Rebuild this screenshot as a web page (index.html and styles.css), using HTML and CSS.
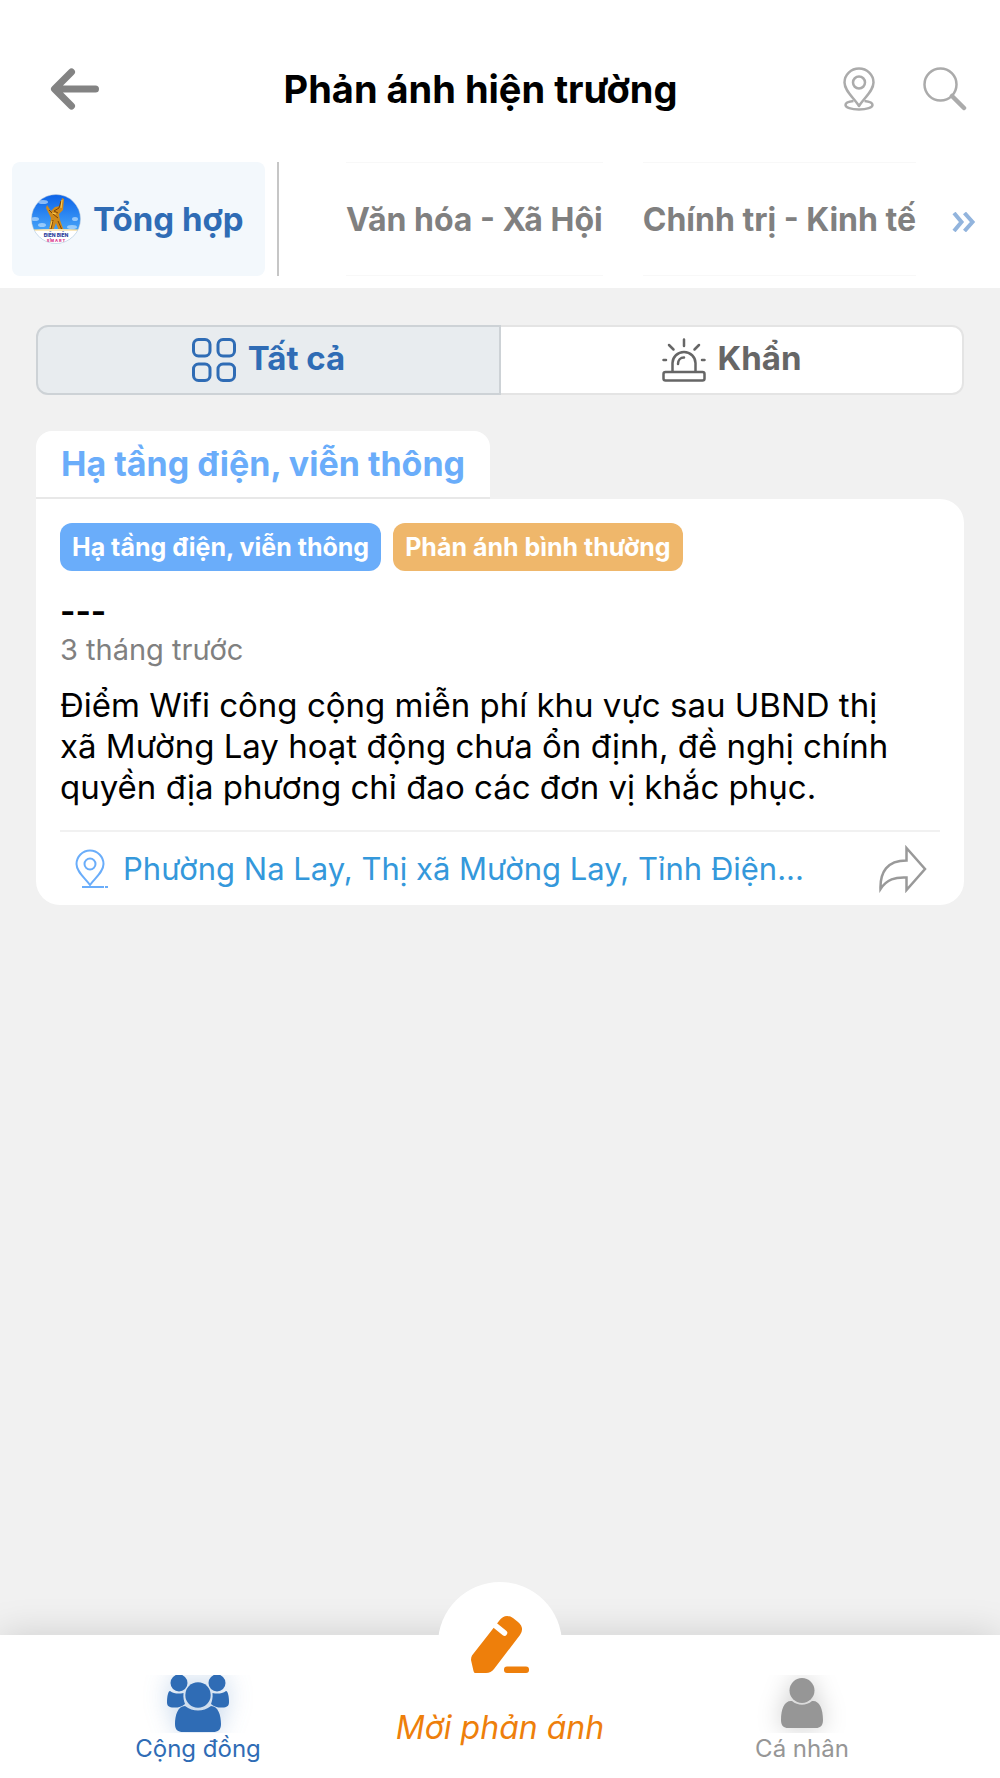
FILE: index.html
```html
<!DOCTYPE html>
<html lang="vi">
<head>
  <meta charset="UTF-8">
  <meta name="viewport" content="width=device-width, initial-scale=1.0">
  <title>Phản ánh hiện trường</title>
  <link rel="stylesheet" href="styles.css">
</head>
<body>
  <header class="header">
    <button class="icon-btn back" aria-label="Quay lại">
      <svg width="50" height="42" viewBox="0 0 50 42" fill="none" stroke="#838383" stroke-width="7" stroke-linecap="round" stroke-linejoin="round">
        <path d="M5 21H45.500M21.500 4L4.500 21L21.500 38"/>
      </svg>
    </button>
    <h1 class="title">Phản ánh hiện trường</h1>
    <button class="icon-btn" aria-label="Bản đồ">
      <svg width="32" height="44" viewBox="0 0 32 44" fill="none" stroke="#ababab" stroke-width="2.500" stroke-linejoin="round">
        <circle cx="16" cy="15.500" r="6"/>
        <path d="M16 39C11 31 1.500 24 1.500 15.500A14.500 14 0 0 1 30.500 15.500C30.500 24 21 31 16 39Z"/>
        <path d="M10.500 34C5 34.500 2.500 36 2.500 38C2.500 40.500 8 42.500 16 42.500S29.500 40.500 29.500 38C29.500 36 27 34.500 21.500 34"/>
      </svg>
    </button>
    <button class="icon-btn" aria-label="Tìm kiếm">
      <svg width="44" height="44" viewBox="0 0 44 44" fill="none" stroke="#ababab" stroke-linecap="round">
        <circle cx="17.500" cy="17.500" r="16" stroke-width="2.500"/>
        <path d="M29 29L41 41" stroke-width="4.500"/>
      </svg>
    </button>
  </header>

  <nav class="tabs">
    <button class="tab active">
      <svg class="logo" width="50" height="50" viewBox="0 0 50 50">
        <defs>
          <linearGradient id="sky" x1="0" y1="0" x2="0" y2="1">
            <stop offset="0" stop-color="#0b62e8"/>
            <stop offset="1" stop-color="#5cbcff"/>
          </linearGradient>
          <clipPath id="round"><circle cx="25" cy="25" r="24.500"/></clipPath>
        </defs>
        <g clip-path="url(#round)">
          <rect width="50" height="50" fill="url(#sky)"/>
          <g fill="#d4ecff" opacity="0.6">
            <ellipse cx="12" cy="8" rx="5" ry="2"/>
            <ellipse cx="4" cy="25" rx="4" ry="2"/>
            <ellipse cx="44" cy="25" rx="3" ry="2"/>
            <ellipse cx="11" cy="31" rx="4" ry="2"/>
            <ellipse cx="41" cy="33" rx="5" ry="2"/>
          </g>
          <path d="M31 4L33 5L32 16L28 20L29 26L33 37H28L25 29L22 37H18L20 24L15 14L16 11L20 17L24 13L29 12Z" fill="#d08a1b"/>
          <path d="M30 7L28 14L23 17L27 19M18 16L22 20L27 24M22 26L20 35M27 27L31 36" stroke="#7a4308" fill="none"/>
          <path d="M31 6L30 14M21 19L25 20M21 27L19 34" stroke="#ffcf50" fill="none"/>
          <path d="M0 36Q25 34 50 36V50H0Z" fill="#fff"/>
          <path d="M3 36H47" stroke="#f3cf78"/>
          <text class="logo-name" x="25" y="43" text-anchor="middle">ĐIỆN BIÊN</text>
          <text class="logo-sub" x="25" y="48" text-anchor="middle">S M A R T</text>
        </g>
        <circle cx="25" cy="25" r="24.500" fill="none" stroke="#c6ced6" stroke-width="0.500"/>
      </svg>
      Tổng hợp
    </button>
    <span class="divider"></span>
    <div class="tab-list">
      <button class="tab">Văn hóa - Xã Hội</button>
      <button class="tab">Chính trị - Kinh tế</button>
    </div>
    <button class="icon-btn more" aria-label="Xem thêm">
      <svg width="24" height="20" viewBox="0 0 24 20" fill="none" stroke="#92b4dd" stroke-width="4">
        <path d="M2 1L9.500 10L2 19M12.500 1L20.500 10L12.500 19"/>
      </svg>
    </button>
  </nav>

  <main class="content">
    <div class="switch">
      <button class="switch-btn selected">
        <svg width="44" height="44" viewBox="0 0 44 44" fill="none" stroke="#2f6cb5" stroke-width="3">
          <rect x="1.500" y="1.500" width="16.500" height="16.500" rx="5"/>
          <rect x="26" y="1.500" width="16.500" height="16.500" rx="5"/>
          <rect x="1.500" y="26" width="16.500" height="16.500" rx="5"/>
          <rect x="26" y="26" width="16.500" height="16.500" rx="5"/>
        </svg>
        <span>Tất cả</span>
      </button>
      <button class="switch-btn">
        <svg width="44" height="44" viewBox="0 0 44 44" fill="none" stroke="#666" stroke-width="2.500" stroke-linecap="round">
          <rect x="1.500" y="34" width="41" height="8.500" rx="2"/>
          <path d="M10.500 33V25A11.500 11 0 0 1 33.500 25V33M16 26C16 22 18.500 19.500 22 19.500"/>
          <path d="M22 1.500V8M7 7L11.500 11.500M37 7L32.500 11.500M1.500 22H4M40 22H42.500"/>
        </svg>
        <span>Khẩn</span>
      </button>
    </div>

    <section class="group">
      <h2 class="group-title">Hạ tầng điện, viễn thông</h2>
      <article class="card">
        <div class="tags">
          <span class="tag blue">Hạ tầng điện, viễn thông</span>
          <span class="tag orange">Phản ánh bình thường</span>
        </div>
        <h3 class="name">---</h3>
        <p class="time">3 tháng trước</p>
        <p class="text">Điểm Wifi công cộng miễn phí khu vực sau UBND thị xã Mường Lay hoạt động chưa ổn định, đề nghị chính quyền địa phương chỉ đao các đơn vị khắc phục.</p>
        <div class="card-footer">
          <svg width="33" height="40" viewBox="0 0 33 40" fill="none" stroke="#6aadfa" stroke-width="2">
            <circle cx="15" cy="15" r="5.500"/>
            <path d="M15 36C10 29 1.500 23 1.500 15A13.500 13.500 0 0 1 28.500 15C28.500 23 20 29 15 36Z"/>
            <path d="M7 38H29M30 38H33"/>
          </svg>
          <a class="place" href="#">Phường Na Lay, Thị xã Mường Lay, Tỉnh Điện...</a>
          <button class="icon-btn" aria-label="Chia sẻ">
            <svg width="50" height="48" viewBox="0 0 50 48" fill="none" stroke="#999" stroke-width="2.500">
              <path d="M28.500 3L47 24L28.500 45V32.500C17 32 9 34 2.500 44C2 27 9 15.500 28.500 15.500Z"/>
            </svg>
          </button>
        </div>
      </article>
    </section>
  </main>

  <nav class="bottom-nav">
    <a class="nav-item current" href="#">
      <svg width="120" height="58" viewBox="0 0 120 58">
        <g class="glow" fill="#2f6cb5">
          <circle cx="41" cy="8" r="8.500"/>
          <circle cx="79" cy="8" r="8.500"/>
          <path d="M32 16C36 19 41 19 45.500 18C45 23 46 26 47 29C43 32 40 33 34 32.500C30 32 29 30 29 27C29 22 30 16 32 16Z"/>
          <path d="M88 16C84 19 79 19 74.500 18C75 23 74 26 73 29C77 32 80 33 86 32.500C90 32 91 30 91 27C91 22 90 16 88 16Z"/>
          <circle cx="60" cy="20" r="12.700"/>
          <path d="M47 31C55 37 65 37 73 31C80 31 83 40 83 49C83 55 80 57 75 57H45C40 57 37 55 37 49C37 40 40 31 47 31Z"/>
        </g>
      </svg>
      <span>Cộng đồng</span>
    </a>
    <a class="nav-item write" href="#">
      <svg width="60" height="60" viewBox="0 0 60 60" fill="#ee7f0b">
        <path d="M2 37.500L29 3Q35-5 43 0L48 4Q55 10 50 17L24 51Q21 55 16 55H5Q4 55 3.500 53L1 42Q1 39 2 37.500Z"/>
        <path d="M24 6.500L34.500 15" stroke="#fff" stroke-width="5.500" stroke-linecap="round"/>
        <rect x="34" y="48.500" width="25" height="6.500" rx="3"/>
      </svg>
      <span>Mời phản ánh</span>
    </a>
    <a class="nav-item" href="#">
      <svg width="120" height="58" viewBox="0 0 120 58">
        <g class="glow gray" fill="#969696">
          <circle cx="60" cy="15.500" r="12.500"/>
          <path d="M50 26C56 31 64 31 70 26C77 25 81 33 81 45C81 51 78 53 74 53H46C42 53 39 51 39 45C39 33 43 25 50 26Z"/>
        </g>
      </svg>
      <span>Cá nhân</span>
    </a>
  </nav>
</body>
</html>
```
FILE: styles.css
```css
* {
  box-sizing: border-box;
}

body {
  margin: 0;
  min-height: 100vh;
  display: flex;
  flex-direction: column;
  background-color: #f1f1f1;
  font-family: Inter, "Noto Sans", sans-serif;
  color: #000;
}

button {
  font: inherit;
  color: inherit;
  background: none;
  border: none;
  padding: 0;
}

a {
  text-decoration: none;
}

svg {
  display: block;
  flex-shrink: 0;
}

.header {
  display: flex;
  align-items: center;
  padding: 64px 33px 48px 50px;
  background-color: #fff;
}

.icon-btn {
  display: flex;
  align-items: center;
}

.back {
  width: 68px;
}

.header .icon-btn:last-child {
  margin-left: 48px;
}

.title {
  flex: 1;
  margin: 0;
  text-align: center;
  font-size: 38px;
  line-height: 50px;
  font-weight: 700;
}

.tabs {
  display: flex;
  padding: 0 24px 12px 12px;
  background-color: #fff;
}

.tab {
  height: 114px;
  color: #808080;
  font-size: 32px;
  font-weight: 700;
  white-space: nowrap;
}

.tab.active {
  display: flex;
  align-items: center;
  gap: 12px;
  padding: 0 22px 0 19px;
  border-radius: 8px;
  background-color: #f3f8fc;
  color: #2f6cb5;
  font-size: 33px;
}

.logo-name {
  font-size: 5px;
  font-weight: 800;
  fill: #2a3c9c;
}

.logo-sub {
  font-size: 4px;
  font-weight: 800;
  fill: #d8328c;
}

.divider {
  width: 2px;
  margin-left: 12px;
  background-color: #c6c6c6;
}

.tab-list {
  flex: 1;
  display: flex;
  justify-content: flex-end;
  gap: 40px;
}

.tab-list .tab {
  border-top: 1px solid #f8f8f8;
  border-bottom: 1px solid #f8f8f8;
}

.more {
  margin: 6px 0 0 36px;
}

.content {
  flex: 1;
  padding: 37px 36px;
}

.switch {
  display: flex;
}

.switch-btn {
  flex: 1;
  display: flex;
  justify-content: center;
  align-items: center;
  gap: 12px;
  height: 70px;
  border: 2px solid #e4e4e4;
  border-left: none;
  border-radius: 0 12px 12px 0;
  background-color: #fff;
  color: #666;
  font-size: 33px;
  font-weight: 700;
}

.switch-btn.selected {
  border: 2px solid #cdd2d6;
  border-radius: 12px 0 0 12px;
  background-color: #e8ecef;
  color: #2f6cb5;
}

.switch-btn span {
  padding-bottom: 4px;
}

.group {
  margin-top: 36px;
}

.group-title {
  width: fit-content;
  margin: 0;
  padding: 0 25px;
  border-radius: 16px 16px 0 0;
  border-bottom: 2px solid #e8e8e8;
  background-color: #fff;
  color: #6aadfa;
  font-size: 34px;
  line-height: 66px;
  font-weight: 700;
}

.card {
  padding: 24px 24px 12px;
  border-radius: 0 24px 24px 24px;
  background-color: #fff;
}

.tags {
  display: flex;
  gap: 12px;
}

.tag {
  padding: 0 12px;
  border-radius: 12px;
  color: #fff;
  font-size: 25px;
  line-height: 48px;
  font-weight: 700;
}

.blue {
  background-color: #6aadfa;
}

.orange {
  background-color: #efb76b;
}

.name {
  margin: 20px 0 0;
  font-size: 33px;
  line-height: 40px;
  font-weight: 700;
}

.time {
  margin: 0;
  color: #808080;
  font-size: 29px;
  line-height: 38px;
}

.text {
  margin: 16px 0 0;
  padding-right: 48px;
  font-size: 33px;
  line-height: 41px;
}

.card-footer {
  display: flex;
  align-items: center;
  margin-top: 22px;
  padding: 13px 12px 0 15px;
  border-top: 2px solid #f1f1f1;
}

.place {
  flex: 1;
  margin-left: 15px;
  color: #3498db;
  font-size: 31px;
  line-height: 40px;
}

.bottom-nav {
  position: relative;
  display: grid;
  grid-template-columns: 1fr 1fr 1fr;
  padding: 0 47px 14px;
  background-color: #fff;
  box-shadow: 0 0 36px rgba(0, 0, 0, 0.15);
}

/* white bump behind the pencil */
.bottom-nav::before {
  content: "";
  position: absolute;
  top: -53px;
  left: 50%;
  width: 124px;
  height: 124px;
  margin-left: -62px;
  border-radius: 50%;
  background-color: #fff;
}

.nav-item {
  position: relative;
  display: flex;
  flex-direction: column;
  align-items: center;
  padding-top: 40px;
  color: #969696;
  font-size: 24px;
  line-height: 31px;
}

.nav-item.current {
  color: #2f6cb5;
}

.glow {
  filter: drop-shadow(0 0 12px rgba(47, 108, 181, 0.3));
}

.glow.gray {
  filter: drop-shadow(0 0 12px rgba(0, 0, 0, 0.2));
}

.nav-item.write {
  gap: 30px;
  margin-top: -17px;
  padding-top: 0;
  color: #ee7f0b;
  font-size: 32px;
  line-height: 40px;
  font-style: italic;
}

.write svg {
  overflow: visible;
}
```
